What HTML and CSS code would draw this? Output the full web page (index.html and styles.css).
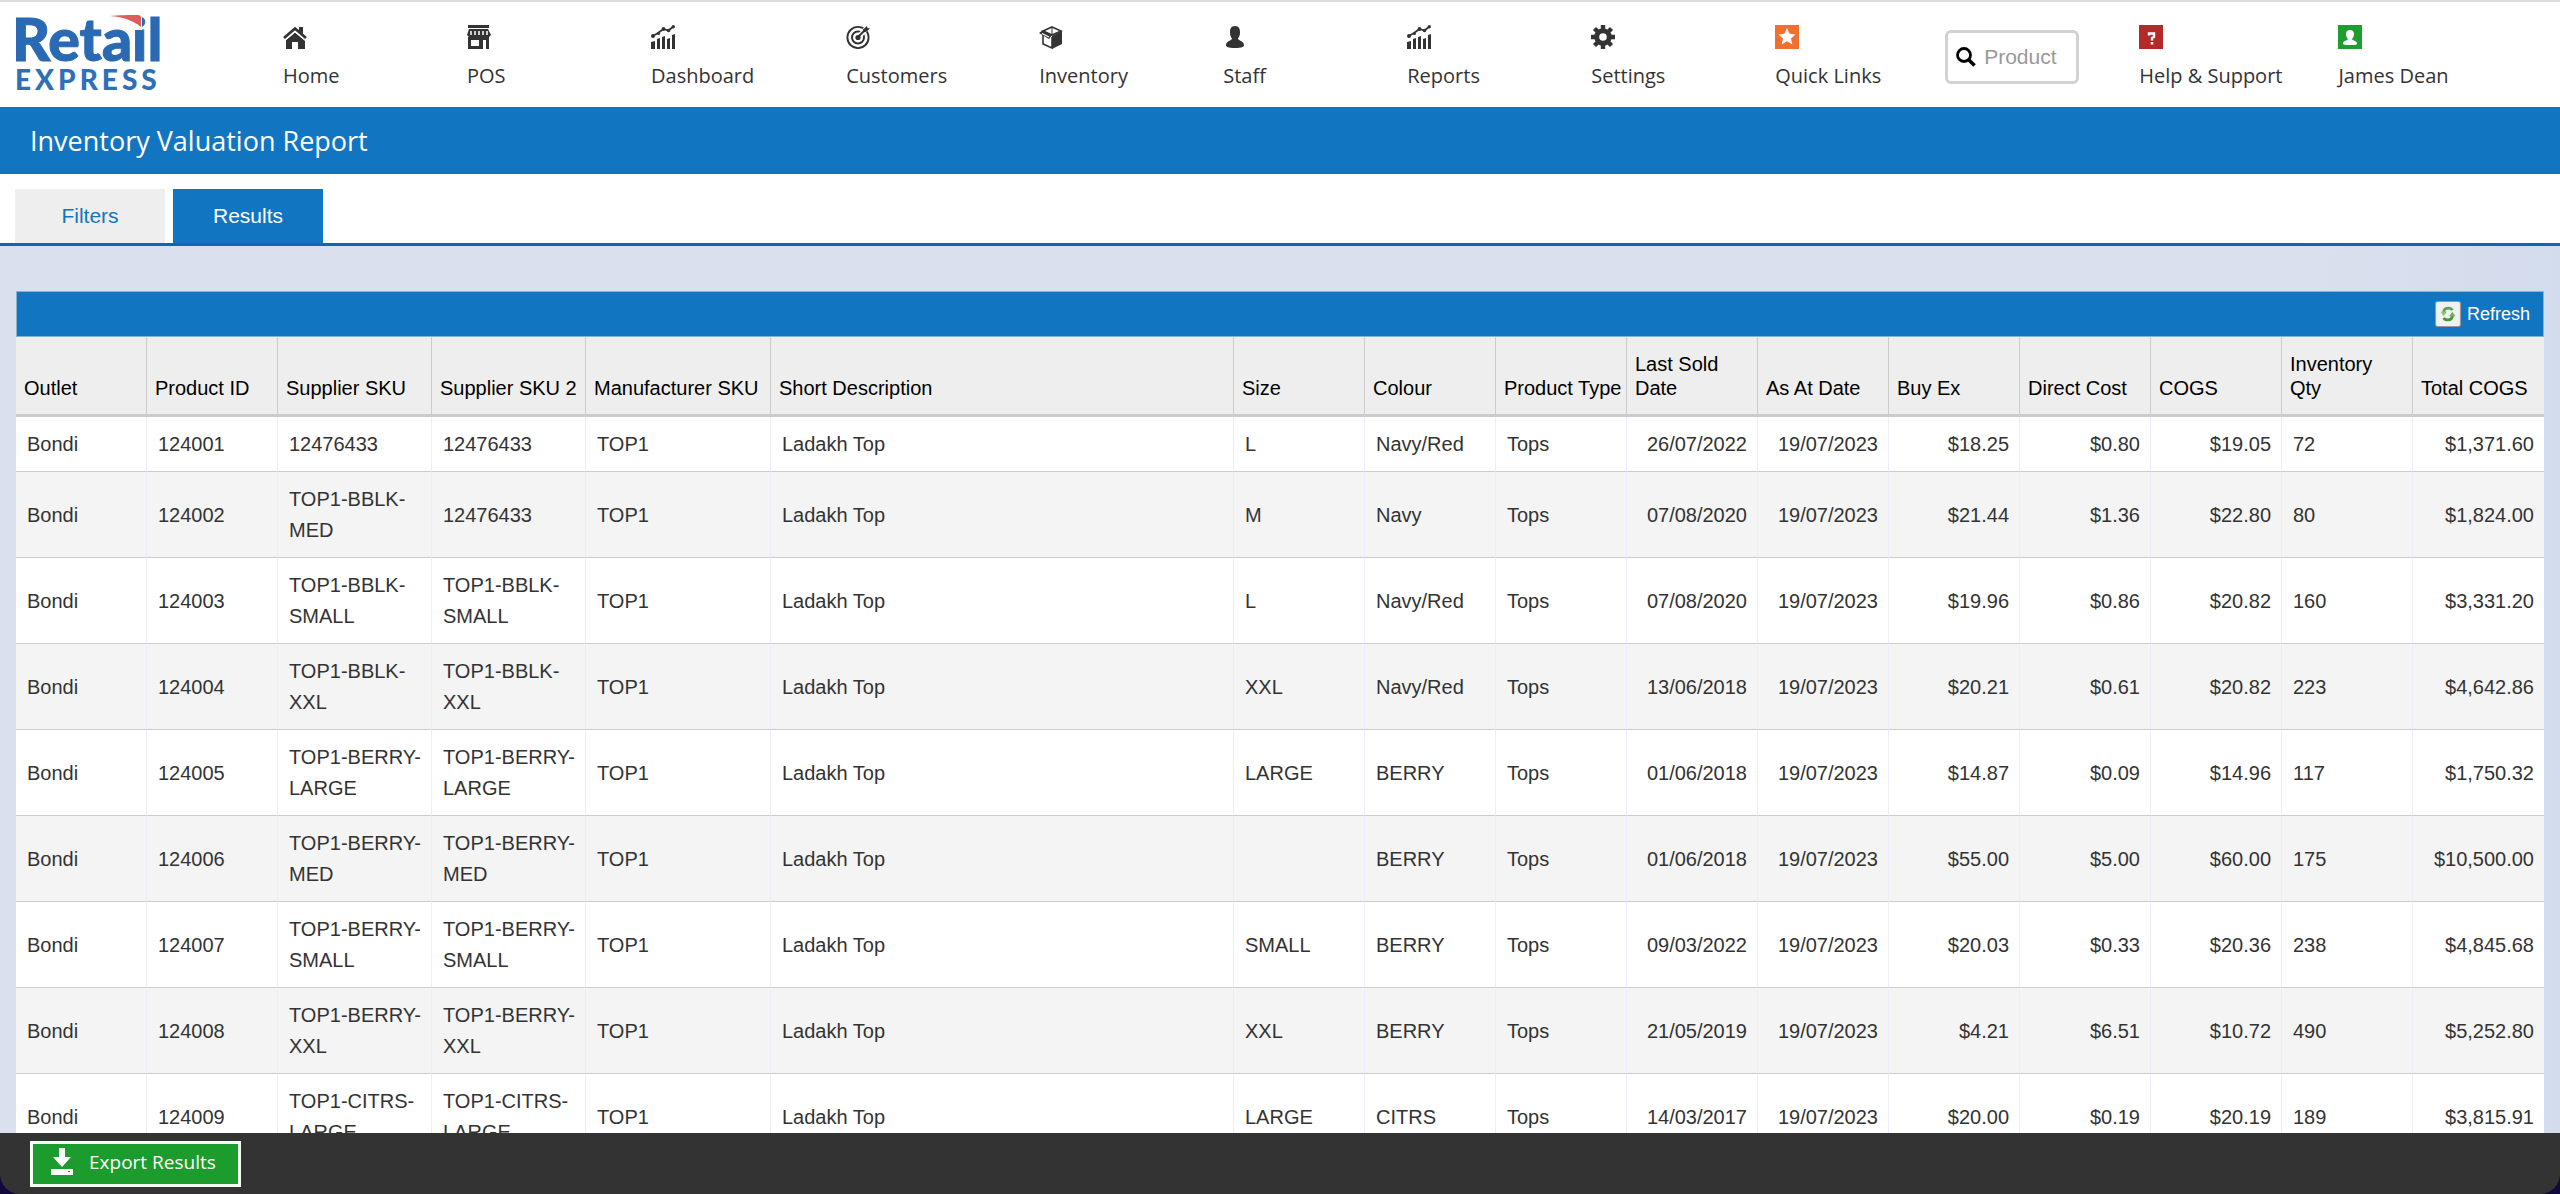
FILE: index.html
```
<!DOCTYPE html>
<html lang="en">
<head>
<meta charset="utf-8">
<title>Inventory Valuation Report</title>
<link rel="stylesheet" href="styles.css">
</head>
<body>
<svg class="defs" aria-hidden="true">
  <symbol id="chart" viewBox="0 0 24 24"><path d="M0 17l4-1v8H0zM6 14l3-1v11H6zM11 12l3-1v13h-3zM16 14l3-1v11h-3zM21 10l3-1v15h-3z"/><path d="M1 11.500l6-3.500 5.500-4 5 1.500L22.500 1.500" fill="none" stroke="currentColor" stroke-width="1.800"/><circle cx="2" cy="11" r="2"/><circle cx="7.500" cy="8.500" r="1.500"/><circle cx="12.500" cy="4" r="1.900"/><circle cx="17.500" cy="5.500" r="1.800"/><circle cx="22.300" cy="1.800" r="1.700"/></symbol>
</svg>
<header class="topbar">
  <a class="logo" href="#" aria-label="Retail Express">
    <svg width="180" height="98" viewBox="0 0 180 98">
      <text class="logo-name" x="12" y="59">Retail</text>
      <rect x="125" y="8" width="17" height="20" fill="#fff"/>
      <path d="M110 14c8-1 20-1 28-1q3 0 3 3v9c-7-6-17-10-31-11z" fill="#e05c5c"/>
      <text class="logo-sub" x="15" y="88">EXPRESS</text>
    </svg>
  </a>
  <nav class="nav">
    <a class="item" href="#"><svg viewBox="0 0 24 24"><path d="M12 7.500L3 15v9h6v-7h6v7h7v-9z"/><path d="M1 13L12 3.500 23 13" fill="none" stroke="currentColor" stroke-width="2.800"/><path d="M16 2h4v7l-4-3z"/><path d="M2 15.500L12 7l10 8.500" fill="none" stroke="#fff"/></svg>Home</a>
    <a class="item" href="#"><svg viewBox="0 0 24 24"><path d="M1 0h21v3H1zM2 4h19l3 6-2 2H2l-2-2z"/><path d="M4 6v4M8 6v4M12 6v4M16 6v4M20 6v4" stroke="#fff" stroke-width="1.500"/><path fill-rule="evenodd" d="M1 12h21v12h-3v-9h-3v9H1zM4 15v6h8v-6z"/></svg>POS</a>
    <a class="item" href="#"><svg viewBox="0 0 24 24"><use href="#chart"/></svg>Dashboard</a>
    <a class="item" href="#"><svg viewBox="0 0 24 24"><g fill="none" stroke="currentColor"><circle cx="12" cy="12.500" r="10.600" stroke-width="1.900"/><circle cx="12" cy="12.500" r="6" stroke-width="2"/><path d="M12 12.500L20 4" stroke="#fff" stroke-width="5"/><path d="M12 12L20 4" stroke-width="2"/></g><circle cx="12" cy="12.500" r="2.600"/><path d="M17 4.500L21 1l.5 2 2.500.5L20 7h-3z"/></svg>Customers</a>
    <a class="item" href="#"><svg viewBox="0 0 24 24"><path d="M13 2l9 4-9 4-9-4z" fill="#fff" stroke="currentColor" stroke-width="1.600"/><path d="M13 2v7" stroke="currentColor"/><path d="M4 9v10l9 4V12" fill="#fff" stroke="currentColor" stroke-width="1.600"/><path d="M13 11l10-5v13l-10 5zM0 8l4-3 9 5-3 4z"/><path d="M3 8.500l7 3.500" stroke="#fff" stroke-width="1.300"/></svg>Inventory</a>
    <a class="item" href="#"><svg viewBox="0 0 24 24"><path d="M12 1c4 0 5 3 5 6 0 4-1 5-2 6.500 0 2 6 2.500 6 6.500 0 2-2 3-9 3s-9-1-9-3c0-4 6-4.500 6-6.500C8 12 7 11 7 7c0-3 1-6 5-6z"/></svg>Staff</a>
    <a class="item" href="#"><svg viewBox="0 0 24 24"><use href="#chart"/></svg>Reports</a>
    <a class="item" href="#"><svg viewBox="0 0 24 24"><circle cx="12" cy="12" r="6.300" fill="none" stroke="currentColor" stroke-width="5"/><path d="M12 0v5M12 19v5M0 12h5M19 12h5M3.500 3.500l4 4M16.500 16.500l4 4M20.500 3.500l-4 4M3.500 20.500l4-4" stroke="currentColor" stroke-width="4.400"/></svg>Settings</a>
    <a class="item tight" href="#"><svg viewBox="0 0 24 24"><path fill="#ef7030" d="M0 0h24v24H0z"/><path fill="#fff" d="M12 3l2.600 5.800 5.900.600-4.500 4 1.300 6.100L12 16.300l-5.300 3.200L8 13.400l-4.500-4 5.900-.6z"/></svg>Quick Links</a>
    <label class="search">
      <svg viewBox="0 0 20 20"><circle cx="8" cy="8" r="6.500" fill="none" stroke="#000" stroke-width="2.800"/><path d="M12.500 12.500l6 6" stroke="#000" stroke-width="3.500"/></svg>
      <input type="text" placeholder="Product" aria-label="Product">
    </label>
    <a class="item tight" href="#"><svg viewBox="0 0 24 24"><path fill="#b42a28" d="M0 0h24v24H0z"/><path d="M10 10.500V8.500h5V12L13 13v2.500" fill="none" stroke="#fff" stroke-width="2.400"/><path fill="#fff" d="M11.700 17h2.600v2.500h-2.600z"/></svg>Help &amp; Support</a>
    <a class="item tight" href="#"><svg viewBox="0 0 24 24"><path fill="#1e9e2e" d="M0 0h24v24H0z"/><path fill="#fff" d="M12 5c3 0 4 2 4 4 0 3-1 3.500-2 5 0 1.500 5 1.500 5 4.500 0 1.500-2 1.500-7 1.500s-7 0-7-1.500c0-3 5-3 5-4.500-1-1.500-2-2-2-5 0-2 1-4 4-4z"/></svg>James Dean</a>
  </nav>
</header>
<h1 class="title">Inventory Valuation Report</h1>
<div class="tabs" role="tablist">
  <button class="tab" type="button" role="tab">Filters</button>
  <button class="tab active" type="button" role="tab" aria-selected="true">Results</button>
</div>
<main class="content">
  <div class="toolbar">
    <button class="refresh" type="button"><svg viewBox="0 0 24 24"><rect x=".5" y=".5" width="23" height="23" rx="2" fill="#f1f1f1" stroke="#999"/><g fill="none" stroke-width="2.600"><path d="M8 11q0-4.500 4-4.500 3 0 4 2" stroke="#58a552"/><path d="M16 13q0 4.500-4 4.500-3 0-4-2" stroke="#4c9638"/></g><path d="M5 10h6l-3 4z" fill="#8cc474"/><path d="M13 14h6l-3-4z" fill="#6fb356"/></svg>Refresh</button>
  </div>
  <table class="grid">
    <colgroup>
      <col class="c-std"><col class="c-std"><col class="c-sku"><col class="c-sku"><col class="c-man"><col>
      <col class="c-std"><col class="c-std"><col class="c-std"><col class="c-std"><col class="c-std"><col class="c-std"><col class="c-std"><col class="c-std"><col class="c-std"><col class="c-std">
    </colgroup>
    <thead>
      <tr><th>Outlet</th><th>Product ID</th><th>Supplier SKU</th><th>Supplier SKU 2</th><th>Manufacturer SKU</th><th>Short Description</th><th>Size</th><th>Colour</th><th>Product Type</th><th>Last Sold Date</th><th>As At Date</th><th>Buy Ex</th><th>Direct Cost</th><th>COGS</th><th>Inventory<br>Qty</th><th>Total COGS</th></tr>
    </thead>
    <tbody>
      <tr><td>Bondi</td><td>124001</td><td>12476433</td><td>12476433</td><td>TOP1</td><td>Ladakh Top</td><td>L</td><td>Navy/Red</td><td>Tops</td><td class="r">26/07/2022</td><td class="r">19/07/2023</td><td class="r">$18.25</td><td class="r">$0.80</td><td class="r">$19.05</td><td>72</td><td class="r">$1,371.60</td></tr>
      <tr><td>Bondi</td><td>124002</td><td>TOP1-BBLK-MED</td><td>12476433</td><td>TOP1</td><td>Ladakh Top</td><td>M</td><td>Navy</td><td>Tops</td><td class="r">07/08/2020</td><td class="r">19/07/2023</td><td class="r">$21.44</td><td class="r">$1.36</td><td class="r">$22.80</td><td>80</td><td class="r">$1,824.00</td></tr>
      <tr><td>Bondi</td><td>124003</td><td>TOP1-BBLK-SMALL</td><td>TOP1-BBLK-SMALL</td><td>TOP1</td><td>Ladakh Top</td><td>L</td><td>Navy/Red</td><td>Tops</td><td class="r">07/08/2020</td><td class="r">19/07/2023</td><td class="r">$19.96</td><td class="r">$0.86</td><td class="r">$20.82</td><td>160</td><td class="r">$3,331.20</td></tr>
      <tr><td>Bondi</td><td>124004</td><td>TOP1-BBLK-XXL</td><td>TOP1-BBLK-XXL</td><td>TOP1</td><td>Ladakh Top</td><td>XXL</td><td>Navy/Red</td><td>Tops</td><td class="r">13/06/2018</td><td class="r">19/07/2023</td><td class="r">$20.21</td><td class="r">$0.61</td><td class="r">$20.82</td><td>223</td><td class="r">$4,642.86</td></tr>
      <tr><td>Bondi</td><td>124005</td><td>TOP1-BERRY-LARGE</td><td>TOP1-BERRY-LARGE</td><td>TOP1</td><td>Ladakh Top</td><td>LARGE</td><td>BERRY</td><td>Tops</td><td class="r">01/06/2018</td><td class="r">19/07/2023</td><td class="r">$14.87</td><td class="r">$0.09</td><td class="r">$14.96</td><td>117</td><td class="r">$1,750.32</td></tr>
      <tr><td>Bondi</td><td>124006</td><td>TOP1-BERRY-MED</td><td>TOP1-BERRY-MED</td><td>TOP1</td><td>Ladakh Top</td><td></td><td>BERRY</td><td>Tops</td><td class="r">01/06/2018</td><td class="r">19/07/2023</td><td class="r">$55.00</td><td class="r">$5.00</td><td class="r">$60.00</td><td>175</td><td class="r">$10,500.00</td></tr>
      <tr><td>Bondi</td><td>124007</td><td>TOP1-BERRY-SMALL</td><td>TOP1-BERRY-SMALL</td><td>TOP1</td><td>Ladakh Top</td><td>SMALL</td><td>BERRY</td><td>Tops</td><td class="r">09/03/2022</td><td class="r">19/07/2023</td><td class="r">$20.03</td><td class="r">$0.33</td><td class="r">$20.36</td><td>238</td><td class="r">$4,845.68</td></tr>
      <tr><td>Bondi</td><td>124008</td><td>TOP1-BERRY-XXL</td><td>TOP1-BERRY-XXL</td><td>TOP1</td><td>Ladakh Top</td><td>XXL</td><td>BERRY</td><td>Tops</td><td class="r">21/05/2019</td><td class="r">19/07/2023</td><td class="r">$4.21</td><td class="r">$6.51</td><td class="r">$10.72</td><td>490</td><td class="r">$5,252.80</td></tr>
      <tr><td>Bondi</td><td>124009</td><td>TOP1-CITRS-LARGE</td><td>TOP1-CITRS-LARGE</td><td>TOP1</td><td>Ladakh Top</td><td>LARGE</td><td>CITRS</td><td>Tops</td><td class="r">14/03/2017</td><td class="r">19/07/2023</td><td class="r">$20.00</td><td class="r">$0.19</td><td class="r">$20.19</td><td>189</td><td class="r">$3,815.91</td></tr>
    </tbody>
  </table>
</main>
<footer class="actions">
  <button class="export" type="button"><svg viewBox="0 0 24 28"><path d="M9 0h6v9h6l-9 10-9-10h6zM1 21h22v6H1z"/><path fill="#1c9c2c" d="M18 23h2v1h-2z"/></svg>Export Results</button>
</footer>
</body>
</html>
```
FILE: styles.css
```
* { box-sizing: border-box; }

body {
  margin: 0;
  height: 100vh;
  overflow: hidden;
  display: flex;
  flex-direction: column;
  background: #12083c;
  color: #333;
  font-family: "Liberation Sans", Arial, sans-serif;
  font-size: 20px;
}

button { border: 0; padding: 0; font: inherit; cursor: pointer; }

.defs { position: absolute; width: 0; height: 0; }

/* Top navigation */
.topbar {
  flex: none;
  display: flex;
  height: 107px;
  border-top: 2px solid #ddd;
  background: #fff;
}

.logo { flex: none; width: 283px; }
.logo svg { display: block; }
.logo-name { font: 900 59px Lato, sans-serif; fill: #2a6ab5; stroke: #2a6ab5; stroke-width: 1px; }
.logo-sub { font: 900 28px Lato, sans-serif; letter-spacing: 4px; fill: #2f6fba; }

.nav { flex: 1; display: flex; align-items: flex-start; white-space: nowrap; }

.item {
  display: flex;
  flex-direction: column;
  gap: 13px;
  min-width: 184px;
  padding: 23px 92px 0 0;
  color: #333;
  font-family: "Open Sans", sans-serif;
  font-size: 20px;
  line-height: 28px;
  text-decoration: none;
}
.item.tight { min-width: 0; padding-right: 56px; }
.item svg { width: 24px; height: 24px; fill: currentColor; }

.search {
  display: flex;
  align-items: center;
  gap: 8px;
  width: 134px;
  height: 54px;
  margin: 28px 60px 0 8px;
  padding: 0 8px;
  border: 3px solid #d2d2d2;
  border-radius: 6px;
  background: #fff;
}
.search svg { flex: none; width: 20px; height: 20px; }
.search input {
  width: 100%;
  min-width: 0;
  padding: 0;
  border: 0;
  background: none;
  font: 21px "Liberation Sans", Arial, sans-serif;
}
.search input::placeholder { color: #999; }

/* Page title and tabs */
.title {
  flex: none;
  margin: 0;
  padding: 0 30px;
  background: #1275c2;
  color: #fff;
  font: 400 27px/67px "Open Sans", sans-serif;
}

.tabs {
  flex: none;
  display: flex;
  gap: 8px;
  padding: 15px 15px 0;
  border-bottom: 3px solid #0d68ac;
  background: #fff;
}
.tab {
  width: 150px;
  height: 54px;
  background: #eee;
  color: #1275c2;
  font-size: 21px;
}
.tab.active { background: #1275c2; color: #fff; }

/* Results table */
.content {
  flex: 1;
  min-height: 0;
  overflow: hidden;
  padding: 45px 16px 0;
  background: linear-gradient(90deg, #dae0ee 90%, #d3dced);
}

.toolbar {
  display: flex;
  justify-content: flex-end;
  align-items: center;
  height: 46px;
  padding-right: 13px;
  border: 1px solid #84b5d4;
  background: #1275c2;
}
.refresh {
  display: flex;
  align-items: center;
  gap: 6px;
  background: none;
  color: #fff;
  font-size: 18px;
}
.refresh svg { width: 26px; height: 26px; }

.grid {
  width: 100%;
  table-layout: fixed;
  border-collapse: separate;
  border-spacing: 0;
  background: #fff;
}
.c-std { width: 131px; }
.c-sku { width: 154px; }
.c-man { width: 185px; }

.grid th {
  height: 80px;
  padding: 0 4px 14px 8px;
  border-right: 1px solid #ccc;
  border-bottom: 3px solid #ccc;
  background: #eee;
  color: #000;
  font-weight: 400;
  line-height: 24px;
  text-align: left;
  vertical-align: bottom;
}
.grid td {
  padding: 12px 4px 11px 11px;
  border-right: 1px solid #ececfa;
  border-bottom: 1px solid #ccc;
  line-height: 31px;
}
.grid td.r { padding-right: 10px; text-align: right; }
.grid tr > :last-child { border-right: 0; }
.grid tbody tr:nth-child(even) { background: #f4f4f4; }

/* Bottom action bar */
.actions {
  flex: none;
  height: 61px;
  padding: 8px 30px;
  border-radius: 0 0 20px 20px;
  background: #333;
}
.export {
  display: flex;
  align-items: center;
  gap: 15px;
  width: 211px;
  height: 46px;
  padding: 0 0 4px 17px;
  border: 3px solid #f4fff4;
  background: #1c9c2c;
  color: #fff;
  font: 19px "Open Sans", sans-serif;
}
.export svg { width: 24px; height: 28px; fill: #fff; }
```
